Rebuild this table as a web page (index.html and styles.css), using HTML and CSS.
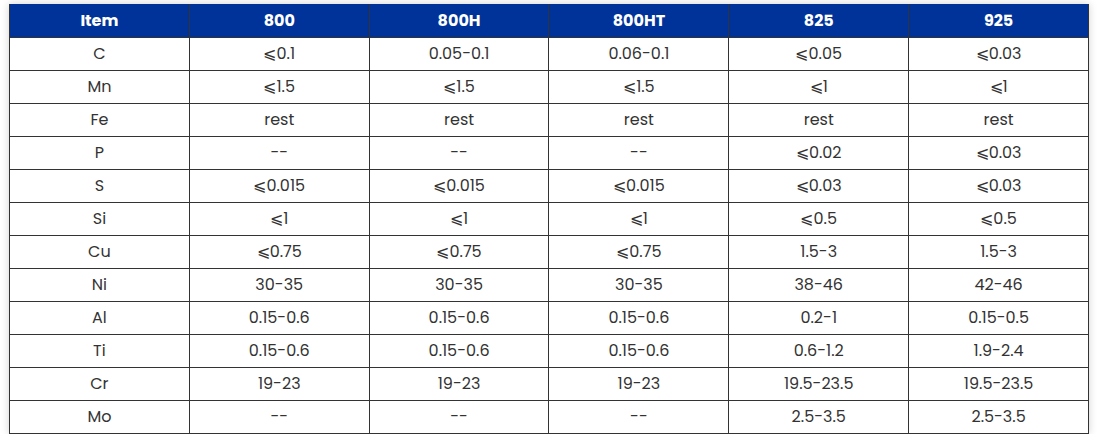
FILE: index.html
```html
<!DOCTYPE html>
<html>
<head>
<meta charset="utf-8">
<link rel="stylesheet" href="styles.css">
</head>
<body>
<div class="wrap">
<table class="spec">
<thead>
<tr><th>Item</th><th>800</th><th>800H</th><th>800HT</th><th>825</th><th>925</th></tr>
</thead>
<tbody>
<tr><td>C</td><td>⩽0.1</td><td>0.05-0.1</td><td>0.06-0.1</td><td>⩽0.05</td><td>⩽0.03</td></tr>
<tr><td>Mn</td><td>⩽1.5</td><td>⩽1.5</td><td>⩽1.5</td><td>⩽1</td><td>⩽1</td></tr>
<tr><td>Fe</td><td>rest</td><td>rest</td><td>rest</td><td>rest</td><td>rest</td></tr>
<tr><td>P</td><td>--</td><td>--</td><td>--</td><td>⩽0.02</td><td>⩽0.03</td></tr>
<tr><td>S</td><td>⩽0.015</td><td>⩽0.015</td><td>⩽0.015</td><td>⩽0.03</td><td>⩽0.03</td></tr>
<tr><td>Si</td><td>⩽1</td><td>⩽1</td><td>⩽1</td><td>⩽0.5</td><td>⩽0.5</td></tr>
<tr><td>Cu</td><td>⩽0.75</td><td>⩽0.75</td><td>⩽0.75</td><td>1.5-3</td><td>1.5-3</td></tr>
<tr><td>Ni</td><td>30-35</td><td>30-35</td><td>30-35</td><td>38-46</td><td>42-46</td></tr>
<tr><td>Al</td><td>0.15-0.6</td><td>0.15-0.6</td><td>0.15-0.6</td><td>0.2-1</td><td>0.15-0.5</td></tr>
<tr><td>Ti</td><td>0.15-0.6</td><td>0.15-0.6</td><td>0.15-0.6</td><td>0.6-1.2</td><td>1.9-2.4</td></tr>
<tr><td>Cr</td><td>19-23</td><td>19-23</td><td>19-23</td><td>19.5-23.5</td><td>19.5-23.5</td></tr>
<tr><td>Mo</td><td>--</td><td>--</td><td>--</td><td>2.5-3.5</td><td>2.5-3.5</td></tr>
</tbody>
</table>
</div>
</body>
</html>
```
FILE: styles.css
```css
html, body {
  margin: 0;
  padding: 0;
  background: #ffffff;
}
.wrap {
  padding: 4px 0 0 9px;
}
.spec {
  width: 1080px;
  border-collapse: collapse;
  table-layout: fixed;
  font-family: "Poppins", "Open Sans", "Noto Sans", sans-serif;
  font-size: 16px;
  color: #333333;
  box-shadow: 0 0 8px rgba(0, 0, 0, 0.18);
}
.spec th,
.spec td {
  height: 33px;
  padding: 0;
  text-align: center;
  vertical-align: middle;
  border: 1px solid #333333;
  box-sizing: border-box;
}
.spec th {
  background: #003399;
  color: #ffffff;
  font-weight: 700;
  border-top: none;
}
```
